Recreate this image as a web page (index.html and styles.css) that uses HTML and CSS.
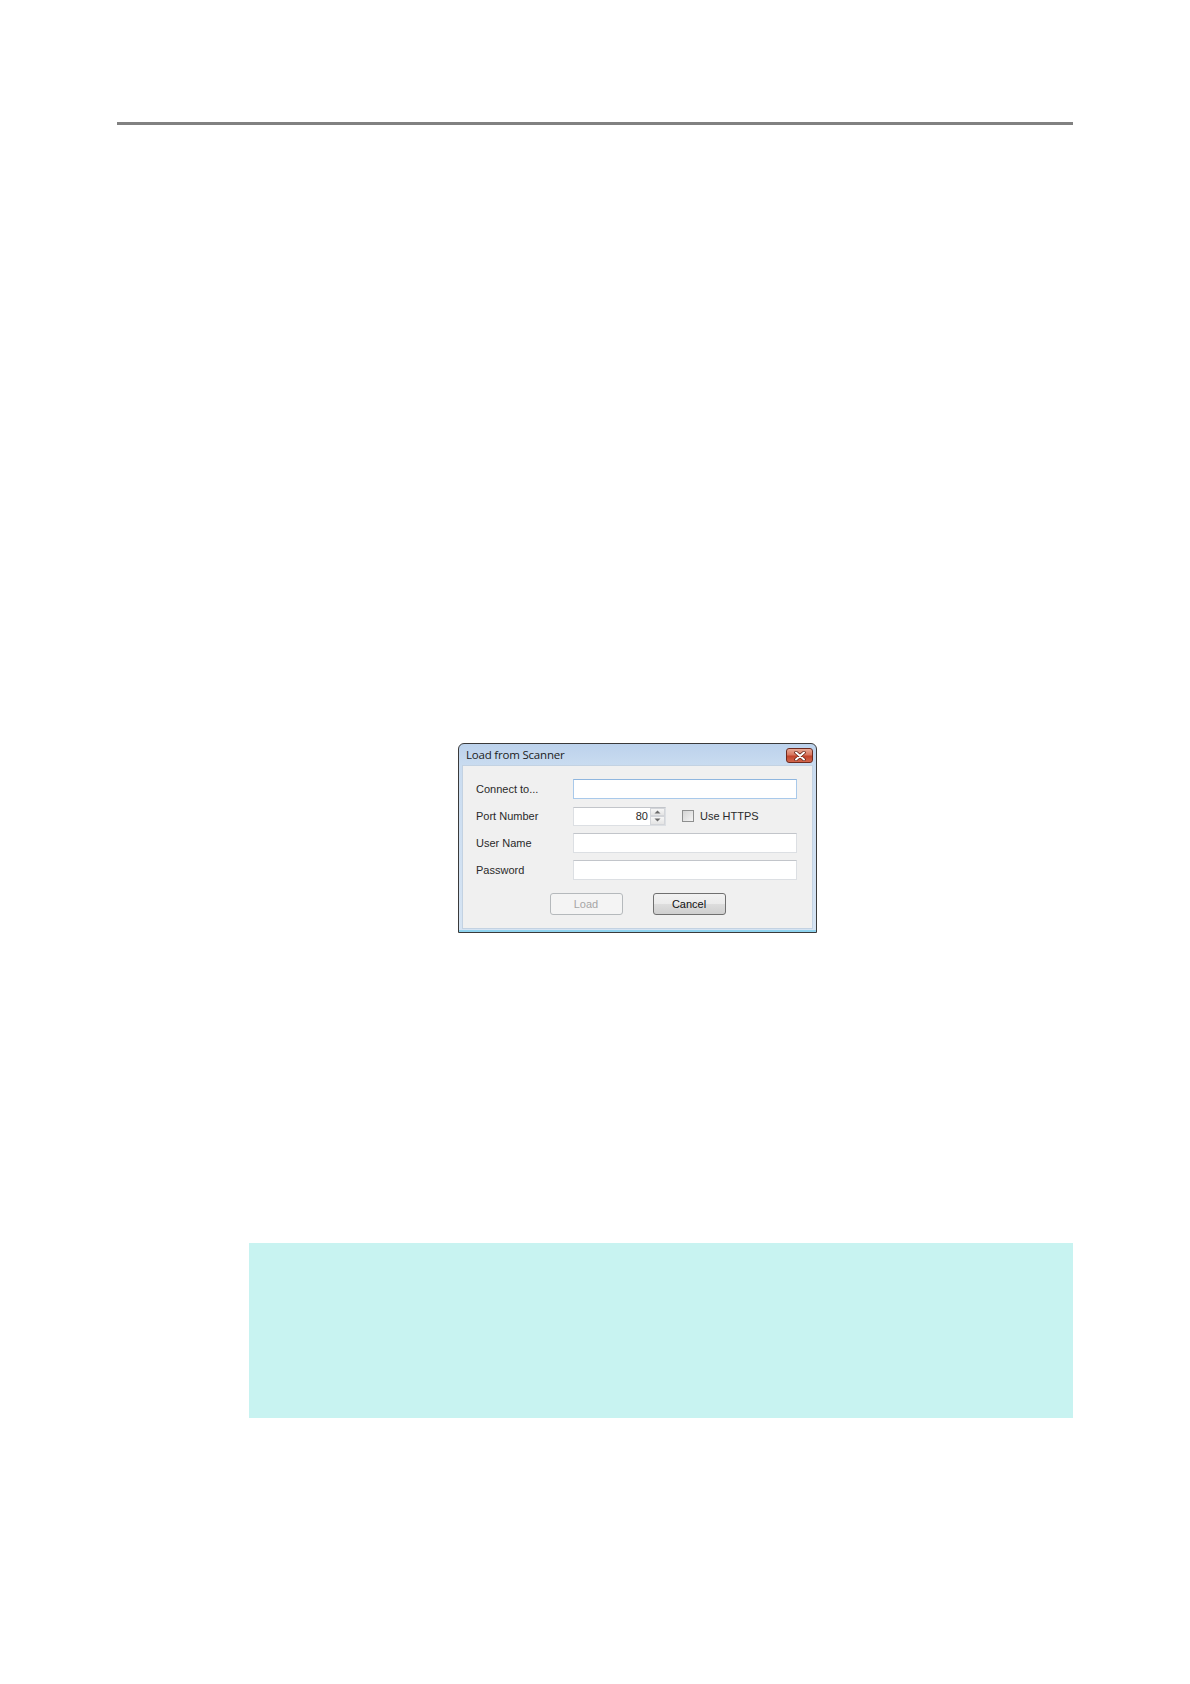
FILE: index.html
```html
<!DOCTYPE html>
<html>
<head>
<meta charset="utf-8">
<link rel="stylesheet" href="styles.css">
</head>
<body>
<div class="page">
  <div class="rule"></div>
  <div class="dialog">
    <div class="titlebar">
      <span class="title">Load from Scanner</span>
      <span class="close">
        <svg width="12" height="10" viewBox="0 0 12 10">
          <path d="M2 1.5 L10 8.5 M10 1.5 L2 8.5" stroke="#5a1a10" stroke-width="3.4" stroke-linecap="round"/>
          <path d="M2 1.5 L10 8.5 M10 1.5 L2 8.5" stroke="#ffffff" stroke-width="2" stroke-linecap="round"/>
        </svg>
      </span>
    </div>
    <div class="body">
      <div class="form">
        <label class="lbl">Connect to...</label>
        <div class="field focus"></div>
        <label class="lbl">Port Number</label>
        <div class="portrow">
          <div class="port">
            <span class="portval">80</span>
            <span class="spin">
              <span class="spinbtn"><svg width="7" height="4" viewBox="0 0 7 4"><path d="M0.5 3.5 L3.5 0.5 L6.5 3.5Z" fill="#6a6a6a"/></svg></span>
              <span class="spinbtn"><svg width="7" height="4" viewBox="0 0 7 4"><path d="M0.5 0.5 L3.5 3.5 L6.5 0.5Z" fill="#6a6a6a"/></svg></span>
            </span>
          </div>
          <span class="check"></span>
          <span class="checklbl">Use HTTPS</span>
        </div>
        <label class="lbl">User Name</label>
        <div class="field"></div>
        <label class="lbl">Password</label>
        <div class="field"></div>
      </div>
      <div class="buttons">
        <span class="btn disabled">Load</span>
        <span class="btn">Cancel</span>
      </div>
    </div>
  </div>
  <div class="note"></div>
</div>
</body>
</html>
```

FILE: styles.css
```css
html, body {
  margin: 0;
  padding: 0;
  background: #ffffff;
}

.page {
  width: 1190px;
  height: 1684px;
  display: flex;
  flex-direction: column;
  align-items: flex-start;
  font-family: "Liberation Sans", Arial, sans-serif;
}

.rule {
  margin-top: 122px;
  margin-left: 117px;
  width: 956px;
  height: 3px;
  background: #818181;
}

.dialog {
  margin-top: 618px;
  margin-left: 458px;
  width: 359px;
  height: 190px;
  box-sizing: border-box;
  border: 1px solid #3a3a3a;
  border-radius: 6px 6px 0 0;
  background: linear-gradient(to bottom, #bcd2ec 0%, #cadcf0 12%, #d6e4f3 100%);
  padding: 0 3px 3px 3px;
  display: flex;
  flex-direction: column;
  box-shadow: inset 0 -2px 0 #8fd3ee;
}

.titlebar {
  height: 21px;
  display: flex;
  align-items: center;
  justify-content: space-between;
  padding-left: 4px;
  padding-right: 0;
}

.title {
  font-family: "Open Sans", "Liberation Sans", sans-serif;
  font-size: 11.5px;
  color: #1c1c1c;
  letter-spacing: -0.2px;
}

.close {
  width: 27px;
  height: 15px;
  box-sizing: border-box;
  border: 1px solid #6e2a1e;
  border-radius: 3px;
  background: linear-gradient(to bottom, #e8a895 0%, #d8765f 45%, #c0432b 55%, #d2664c 100%);
  display: flex;
  align-items: center;
  justify-content: center;
  margin-top: 2px;
}

.body {
  flex: 1;
  background: #f0f0f0;
  border: 1px solid #c3d2e2;
  padding: 13px 0 0 13px;
  font-size: 11px;
  color: #1e1e1e;
}

.form {
  display: grid;
  grid-template-columns: 97px 224px;
  grid-auto-rows: 20px;
  row-gap: 7px;
  align-items: center;
}

.lbl {
  font-size: 11px;
  color: #2a2a2a;
}

.field {
  height: 20px;
  box-sizing: border-box;
  border: 1px solid #dcdfe3;
  border-top-color: #c2c5ca;
  background: #ffffff;
}

.field.focus {
  border-color: #a9c9ea;
  border-top-color: #8fb6df;
}

.portrow {
  display: flex;
  align-items: center;
  height: 20px;
}

.port {
  width: 93px;
  height: 19px;
  box-sizing: border-box;
  border: 1px solid #dcdfe3;
  border-top-color: #c2c5ca;
  background: #ffffff;
  display: flex;
  align-items: center;
  justify-content: flex-end;
}

.portval {
  font-size: 11px;
  color: #2a2a2a;
  margin-right: 2px;
}

.spin {
  width: 15px;
  height: 17px;
  display: flex;
  flex-direction: column;
}

.spinbtn {
  flex: 1;
  box-sizing: border-box;
  border: 1px solid #d3d5d9;
  background: linear-gradient(to bottom, #f6f6f6, #e4e4e4);
  display: flex;
  align-items: center;
  justify-content: center;
}

.check {
  width: 12px;
  height: 12px;
  box-sizing: border-box;
  border: 1px solid #8e8f8f;
  background: linear-gradient(135deg, #d4d4d4, #f4f4f4);
  margin-left: 16px;
}

.checklbl {
  margin-left: 6px;
  font-size: 11px;
  color: #2a2a2a;
}

.buttons {
  display: flex;
  justify-content: center;
  gap: 30px;
  margin-top: 13px;
  padding-right: 13px;
}

.btn {
  width: 73px;
  height: 22px;
  box-sizing: border-box;
  border: 1px solid #707070;
  border-radius: 3px;
  background: linear-gradient(to bottom, #f2f2f2 0%, #ebebeb 50%, #dddddd 51%, #cfcfcf 100%);
  display: flex;
  align-items: center;
  justify-content: center;
  font-size: 11px;
  color: #111;
}

.btn.disabled {
  border-color: #b5b9bc;
  background: #f4f4f4;
  color: #a6a6a6;
}

.note {
  margin-top: 310px;
  margin-left: 249px;
  width: 824px;
  height: 175px;
  background: #c8f3f1;
}
```
